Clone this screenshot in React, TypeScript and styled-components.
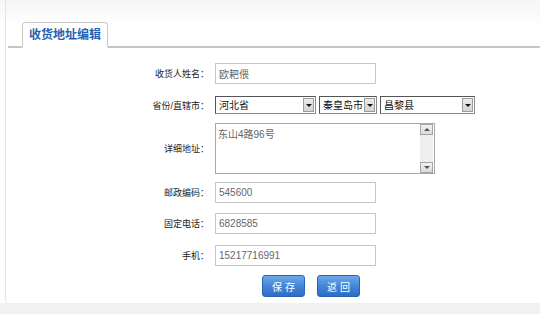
import styled, { createGlobalStyle } from 'styled-components';

const GlobalStyle = createGlobalStyle`
  html, body {
    margin: 0;
    padding: 0;
    background: #fff;
  }
  body {
    font-family: 'Liberation Sans', 'Noto Sans CJK SC', sans-serif;
    font-size: 12px;
    color: #333;
  }
`;

const Page = styled.div`
  width: 540px;
  height: 314px;
  display: flex;
  flex-direction: column;
  background: linear-gradient(#f5f5f5, #fff 26px);
`;

const Main = styled.div`
  flex: 1;
  margin-left: 5px;
  border-left: 1px solid #e4e4e4;
  border-bottom-left-radius: 4px;
  display: flex;
  flex-direction: column;
`;

const TabBar = styled.div`
  display: flex;
  margin: 22px 0 0 2px;
  padding-left: 14px;
  border-bottom: 2px solid #c6c6c6;
`;

const Tab = styled.div`
  box-sizing: border-box;
  height: 26px;
  margin-bottom: -2px;
  padding: 0 6px 2px;
  display: flex;
  align-items: center;
  border: 1px solid #c9c9c9;
  border-bottom: 2px solid #fff;
  border-radius: 4px 4px 0 0;
  background: #fff;
  color: #1f5fb8;
  font-size: 12px;
  font-weight: 700;
`;

const Form = styled.form`
  display: flex;
  flex-direction: column;
`;

const Row = styled.div<{ $gap: number }>`
  display: flex;
  align-items: center;
  margin-top: ${(p) => p.$gap}px;
`;

const Label = styled.label`
  width: 203px;
  margin-right: 6px;
  text-align: right;
  font-size: 9px;
  color: #222;
`;

const TextInput = styled.input`
  box-sizing: border-box;
  width: 161px;
  height: 21px;
  padding: 0 3px;
  border: 1px solid #c6c6c6;
  outline: none;
  font-family: 'Liberation Sans', 'Noto Sans CJK SC', sans-serif;
  font-size: 10px;
  color: #666;
`;

const Selects = styled.div`
  display: flex;
  gap: 3px;
`;

const SelectBox = styled.div<{ $width: number }>`
  box-sizing: border-box;
  width: ${(p) => p.$width}px;
  height: 18px;
  padding: 1px;
  display: flex;
  align-items: center;
  border: 1px solid #8c8c8c;
  border-top-color: #555;
  border-left-color: #555;
  background: #fff;
`;

const Select = styled.select`
  flex: 1;
  min-width: 0;
  height: 100%;
  padding: 0 0 0 2px;
  border: none;
  outline: none;
  appearance: none;
  background: transparent;
  font-family: 'Liberation Sans', 'Noto Sans CJK SC', sans-serif;
  font-size: 10px;
  color: #111;
`;

const SelectArrow = styled.span`
  box-sizing: border-box;
  width: 11px;
  height: 14px;
  display: flex;
  align-items: center;
  justify-content: center;
  border: 1px solid #9c9c9c;
  background: linear-gradient(#ececec, #d4d4d4);

  &::after {
    content: '';
    border: 3px solid transparent;
    border-top: 3px solid #111;
    border-bottom: 0;
  }
`;

const AreaBox = styled.div`
  box-sizing: border-box;
  width: 220px;
  height: 51px;
  display: flex;
  border: 1px solid #a8a8a8;
  background: #fff;
`;

const Area = styled.textarea`
  flex: 1;
  padding: 2px;
  border: none;
  outline: none;
  resize: none;
  font-family: 'Liberation Sans', 'Noto Sans CJK SC', sans-serif;
  font-size: 10px;
  color: #666;
`;

const ScrollTrack = styled.div`
  width: 13px;
  margin-right: 1px;
  display: flex;
  flex-direction: column;
  justify-content: space-between;
  background: #eeeeee;
`;

const ScrollButton = styled.span<{ $up?: boolean }>`
  box-sizing: border-box;
  width: 13px;
  height: 11px;
  display: flex;
  align-items: center;
  justify-content: center;
  border: 1px solid #a4a4a4;
  background: linear-gradient(#f2f2f2, #dadada);

  &::after {
    content: '';
    border: 3px solid transparent;
    ${(p) =>
      p.$up
        ? 'border-bottom: 3px solid #555; border-top: 0;'
        : 'border-top: 3px solid #555; border-bottom: 0;'}
  }
`;

const Actions = styled.div`
  display: flex;
  gap: 12px;
  margin: 9px 0 0 256px;
`;

const Button = styled.button`
  width: 43px;
  height: 22px;
  padding: 0;
  border: 1px solid #2b63b4;
  border-radius: 3px;
  background: linear-gradient(#6ea8ea, #4286d9 50%, #2f6dc5);
  color: #fff;
  font-family: 'Liberation Sans', 'Noto Sans CJK SC', sans-serif;
  font-size: 10px;
  cursor: pointer;
`;

const Footer = styled.div`
  height: 11px;
  background: #f1f1f1;
`;

export default function App() {
  const address = {
    name: '欧耙偎',
    province: '河北省',
    city: '秦皇岛市',
    county: '昌黎县',
    detail: '东山4路96号',
    zip: '545600',
    phone: '6828585',
    mobile: '15217716991',
  };

  return (
    <Page>
      <GlobalStyle />
      <Main>
        <TabBar>
          <Tab>收货地址编辑</Tab>
        </TabBar>

        <Form>
          <Row $gap={15}>
            <Label>收货人姓名：</Label>
            <TextInput defaultValue={address.name} />
          </Row>

          <Row $gap={12}>
            <Label>省份/直辖市：</Label>
            <Selects>
              <SelectBox $width={101}>
                <Select defaultValue={address.province}>
                  <option>{address.province}</option>
                </Select>
                <SelectArrow />
              </SelectBox>
              <SelectBox $width={58}>
                <Select defaultValue={address.city}>
                  <option>{address.city}</option>
                </Select>
                <SelectArrow />
              </SelectBox>
              <SelectBox $width={95}>
                <Select defaultValue={address.county}>
                  <option>{address.county}</option>
                </Select>
                <SelectArrow />
              </SelectBox>
            </Selects>
          </Row>

          <Row $gap={9}>
            <Label>详细地址：</Label>
            <AreaBox>
              <Area defaultValue={address.detail} />
              <ScrollTrack>
                <ScrollButton $up />
                <ScrollButton />
              </ScrollTrack>
            </AreaBox>
          </Row>

          <Row $gap={8}>
            <Label>邮政编码：</Label>
            <TextInput defaultValue={address.zip} />
          </Row>

          <Row $gap={10}>
            <Label>固定电话：</Label>
            <TextInput defaultValue={address.phone} />
          </Row>

          <Row $gap={11}>
            <Label>手机：</Label>
            <TextInput defaultValue={address.mobile} />
          </Row>

          <Actions>
            <Button type="button">保 存</Button>
            <Button type="button">返 回</Button>
          </Actions>
        </Form>
      </Main>
      <Footer />
    </Page>
  );
}
